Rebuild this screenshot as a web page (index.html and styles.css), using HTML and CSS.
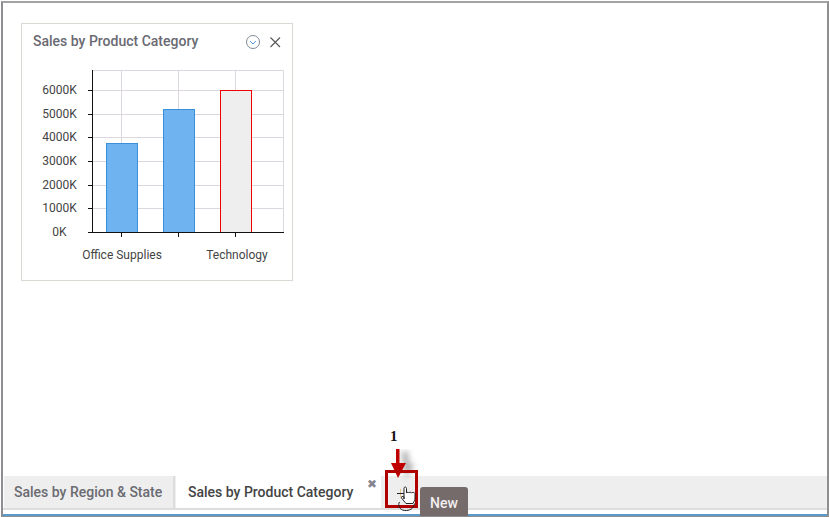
FILE: index.html
```html
<!DOCTYPE html>
<html lang="en">
<head>
<meta charset="utf-8">
<title>Dashboard</title>
<link rel="stylesheet" href="styles.css">
</head>
<body>
<div class="frame">
  <main class="canvas">
    <section class="card">
      <header class="card-head">
        <h2 class="card-title">Sales by Product Category</h2>
        <svg class="card-icons" width="36" height="16" viewBox="0 0 36 16">
          <circle cx="7" cy="8" r="6.500" fill="none" stroke="#7f8a96"/>
          <path d="M4 7l3 3 3-3" fill="none" stroke="#5f9ed8"/>
          <path d="M24.500 3.500l9.500 9.500M34 3.500L24.500 13" fill="none" stroke="#555" stroke-width="1.100"/>
        </svg>
      </header>
      <svg class="chart" width="270" height="219" viewBox="22 61 270 219">
        <g stroke="#dcd6de" fill="none">
          <path d="M92 70.500H283.500V232M92 90.500H283M92 114.500H283M92 137.500H283M92 161.500H283M92 185.500H283M92 208.500H283M121.500 70V232M178.500 70V232M235.500 70V232"/>
        </g>
        <rect class="bar" x="106.500" y="143.500" width="31" height="89"/>
        <rect class="bar" x="163.500" y="109.500" width="31" height="123"/>
        <rect class="bar-hot" x="220.500" y="90.500" width="31" height="142"/>
        <path d="M92.500 70V232.500M88 90.500h4M88 114.500h4M88 137.500h4M88 161.500h4M88 185.500h4M88 208.500h4M88 232.500H284M121.500 233v4M178.500 233v4M235.500 233v4" stroke="#111" fill="none"/>
        <g class="y-labels">
          <text x="59.500" y="94">6000K</text>
          <text x="59.500" y="118">5000K</text>
          <text x="59.500" y="141">4000K</text>
          <text x="59.500" y="165">3000K</text>
          <text x="59.500" y="189">2000K</text>
          <text x="59.500" y="212">1000K</text>
          <text x="59.500" y="236">0K</text>
        </g>
        <g class="x-labels">
          <text x="122" y="259">Office Supplies</text>
          <text x="237" y="259">Technology</text>
        </g>
      </svg>
    </section>
  </main>
  <nav class="tabs">
    <div class="tab">Sales by Region &amp; State</div>
    <div class="tab tab-active">Sales by Product Category<span class="tab-close">✖</span></div>
  </nav>
  <div class="rule"></div>
  <div class="step">1</div>
  <svg class="arrow" width="34" height="44" viewBox="0 0 34 44">
    <defs><filter id="blur" x="-60%" y="-30%" width="220%" height="160%"><feGaussianBlur stdDeviation="3"/></filter></defs>
    <path d="M12 3h6v12h6l-8 14z" fill="#777" opacity=".75" filter="url(#blur)"/>
    <path d="M6 0h3.500v14H16L8 29 1 14h5z" fill="#c00000"/>
  </svg>
  <div class="highlight"></div>
  <svg class="cursor" width="26" height="32" viewBox="0 0 26 32">
    <path d="M5.500 3v8" stroke="#e8c48d"/>
    <path d="M2 7.500h9" stroke="#222"/>
    <path d="M9 13V2.500c0-2 2.500-2 2.500 0V7c.5-1 2-1 2.500 0 .5-1 2-1 2.500 0 .5-.8 3-.8 3.500.5V12c0 2-1 3.500-2 5.500H11L6.500 12c-1-1.500 1.500-2 2.500-1z" fill="#fff" stroke="#222"/>
    <path d="M4.500 16c-2 3 0 8 5 8.500 5 .5 9.500-2 10-7" fill="none" stroke="#222"/>
  </svg>
  <div class="tooltip">New</div>
</div>
</body>
</html>
```
FILE: styles.css
```css
* { box-sizing: border-box; }
html, body { margin: 0; padding: 0; background: #fff; }
body { width: 829px; height: 517px; padding: 1px 0 0 1px; overflow: hidden; font-family: Roboto, sans-serif; }
.frame {
  position: relative;
  width: 828px;
  height: 516px;
  display: flex;
  flex-direction: column;
  border-top: 2px solid #a3a3a3;
  border-left: 2px solid #8f8c92;
  border-right: 2px solid #8f8f8f;
  border-bottom: 1px solid #8f8f8f;
  overflow: hidden;
}
.canvas { flex: 1; padding: 20px 0 0 18px; }
.card {
  width: 272px;
  height: 258px;
  border: 1px solid #d9d9d4;
  display: flex;
  flex-direction: column;
}
.card-head {
  display: flex;
  flex: none;
  justify-content: space-between;
  align-items: center;
  height: 37px;
  padding: 0 10px 3px 11px;
}
.card-icons { margin-top: 2px; }
.card-title { margin: 0; font-size: 14px; font-weight: 500; color: #6a6a72; }
.chart { display: block; flex: none; }
.chart text { font-family: Roboto, sans-serif; font-size: 12px; fill: #444; text-anchor: middle; }
.bar { fill: #70b3f1; stroke: #3a8fdb; }
.bar-hot { fill: #eeeeee; stroke: #f00000; }
.tabs {
  display: flex;
  height: 32px;
  margin-left: 1px;
  background: #eeeeee;
}
.tab {
  width: 171px;
  padding-left: 10px;
  font-size: 14px;
  font-weight: 500;
  line-height: 32px;
  color: #6a6a72;
  border-right: 2px solid #dddddd;
}
.tab-active {
  position: relative;
  width: 205px;
  margin-left: 1px;
  padding-left: 12px;
  background: #fff;
  color: #444;
  border-right: 0;
}
.tab-close {
  position: absolute;
  right: 4px;
  top: -8px;
  font-size: 12px;
  color: #85858f;
}
.rule {
  height: 8px;
  border-top: 2px solid #dddddd;
  background: #fff;
}
.rule::after {
  content: "";
  display: block;
  height: 2px;
  margin-top: 4px;
  background: #5b9bcb;
}
.step {
  position: absolute;
  left: 387px;
  top: 425px;
  font: bold 15px "Liberation Serif", serif;
  color: #111;
}
.arrow { position: absolute; left: 387px; top: 446px; }
.highlight {
  position: absolute;
  left: 382px;
  top: 467px;
  width: 33px;
  height: 38px;
  border: 3px solid #b00000;
}
.cursor { position: absolute; left: 392px; top: 483px; }
.tooltip {
  position: absolute;
  left: 417px;
  top: 484px;
  width: 48px;
  height: 32px;
  padding-top: 8px;
  text-align: center;
  font-size: 14px;
  font-weight: 500;
  color: #f4f0f0;
  background: #756b6b;
  border-radius: 3px 3px 0 0;
}
```
